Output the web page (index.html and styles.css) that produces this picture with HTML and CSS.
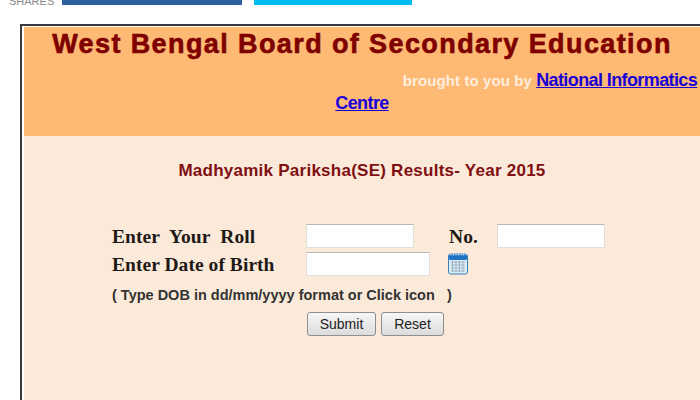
FILE: index.html
```html
<!DOCTYPE html>
<html lang="en">
<head>
<meta charset="utf-8">
<title>West Bengal Board of Secondary Education</title>
<link rel="stylesheet" href="styles.css">
</head>
<body>
<div class="shares">
  <span class="shares-label">SHARES</span>
  <span class="share share-fb"></span>
  <span class="share share-tw"></span>
</div>
<div class="frame">
  <header class="banner">
    <h1 class="title">West Bengal Board of Secondary Education</h1>
    <p class="credit"><span class="spacer"></span><span class="by">brought to you by</span> <a href="#" class="nic">National Informatics Centre</a></p>
  </header>
  <main class="panel">
    <h2 class="exam">Madhyamik Pariksha(SE) Results- Year 2015</h2>
    <form class="form">
      <div class="row">
        <label class="label label-roll">Enter&nbsp; Your&nbsp; Roll</label>
        <input class="field field-roll" type="text">
        <span class="label label-no">No.</span>
        <input class="field field-no" type="text">
      </div>
      <div class="row row-dob">
        <label class="label">Enter Date of Birth</label>
        <input class="field field-dob" type="text">
        <svg class="cal" viewBox="0 0 20 22" width="20" height="22" aria-hidden="true">
          <rect x="0.5" y="1" width="19" height="20" rx="2" fill="#dcecf6" stroke="#3a80bd"/>
          <rect x="1" y="1.5" width="18" height="5.5" rx="1.5" fill="#1f73c4"/>
          <path d="M3 0.5v2M5.5 0.5v2M8 0.5v2M10.500 0.5v2M13 0.5v2M15.500 0.500v2M18 0.500v2" stroke="#e8f2fa" stroke-width="0.8"/>
          <path d="M3 9h14M3 12h14M3 15h14M3 18h14M4.500 8v11M8 8v11M11.500 8v11M15 8v11" stroke="#8fa9bb" stroke-width="0.8" fill="none"/>
        </svg>
      </div>
      <p class="hint">( Type DOB in dd/mm/yyyy format or Click icon &nbsp; )</p>
      <div class="actions">
        <button class="btn btn-submit" type="button">Submit</button>
        <button class="btn btn-reset" type="button">Reset</button>
      </div>
    </form>
  </main>
</div>
</body>
</html>
```
FILE: styles.css
```css
html, body {
  margin: 0;
  padding: 0;
  height: 400px;
  overflow: hidden;
  background: #fff;
  font-family: "Liberation Sans", Arial, sans-serif;
}
.shares {
  display: flex;
  align-items: flex-start;
  height: 24px;
  padding-left: 9px;
}
.shares-label {
  width: 53px;
  margin-top: -5px;
  font-size: 11px;
  line-height: 12px;
  color: #8a8a8a;
}
.share {
  display: block;
  height: 5px;
}
.share-fb {
  width: 180px;
  background: #2d5f9e;
}
.share-tw {
  width: 158px;
  margin-left: 12px;
  background: #00bcf2;
}
.frame {
  width: 676px;
  height: 380px;
  margin-left: 20px;
  border: 2px solid #3a3a3a;
  border-bottom: 0;
  padding: 1px 0 0 2px;
  background: #fff;
}
.banner {
  height: 109px;
  background: #feb974;
  text-align: center;
  overflow: hidden;
}
.title {
  margin: 0;
  padding-top: 2px;
  font-size: 27px;
  line-height: 30px;
  letter-spacing: 1.4px;
  -webkit-text-stroke: 0.6px #7f0000;
  font-weight: 700;
  color: #7f0000;
}
.credit {
  margin: 10px 0 0;
  font-size: 15px;
  line-height: 22px;
  font-weight: 700;
}
.spacer {
  display: inline-block;
  width: 376px;
}
.by {
  color: #fdeedd;
  letter-spacing: 0.1px;
}
.nic {
  font-size: 18px;
  letter-spacing: -0.6px;
  color: #1a00d8;
}
.panel {
  height: 270px;
  background: #fbead9;
  overflow: hidden;
}
.exam {
  margin: 25px 0 0;
  text-align: center;
  font-size: 17px;
  line-height: 20px;
  letter-spacing: 0.25px;
  font-weight: 700;
  color: #7f0f12;
}
.form {
  margin-top: 43px;
  padding-left: 88px;
}
.row {
  display: flex;
  align-items: center;
  height: 24px;
}
.row-dob {
  margin-top: 4px;
}
.label {
  padding-top: 2px;
  font-family: "Liberation Serif", "Times New Roman", serif;
  font-size: 19.500px;
  letter-spacing: 0.05px;
  font-weight: 700;
  color: #1f1a17;
}
.label-roll, .row-dob .label {
  width: 194px;
}
.label-no {
  margin-left: 35px;
  width: 48px;
}
.field {
  box-sizing: border-box;
  height: 24px;
  margin: 0;
  padding: 0;
  border: 1px solid #e3e0dc;
  border-top-color: #b9b7b4;
  background: #fff;
}
.field-roll { width: 108px; }
.field-no { width: 108px; }
.field-dob { width: 124px; }
.cal {
  margin-left: 18px;
}
.hint {
  margin: 9px 0 0;
  font-size: 14.500px;
  line-height: 20px;
  font-weight: 700;
  color: #333;
}
.actions {
  display: flex;
  gap: 5px;
  margin: 7px 0 0 195px;
}
.btn {
  box-sizing: border-box;
  height: 24px;
  margin: 0;
  padding: 0;
  border: 1px solid #8f8f8f;
  border-radius: 3px;
  background: linear-gradient(#f6f6f6, #dcdcdc);
  font-family: "Liberation Sans", Arial, sans-serif;
  font-size: 14px;
  color: #222;
}
.btn-submit { width: 69px; }
.btn-reset { width: 63px; }
```
